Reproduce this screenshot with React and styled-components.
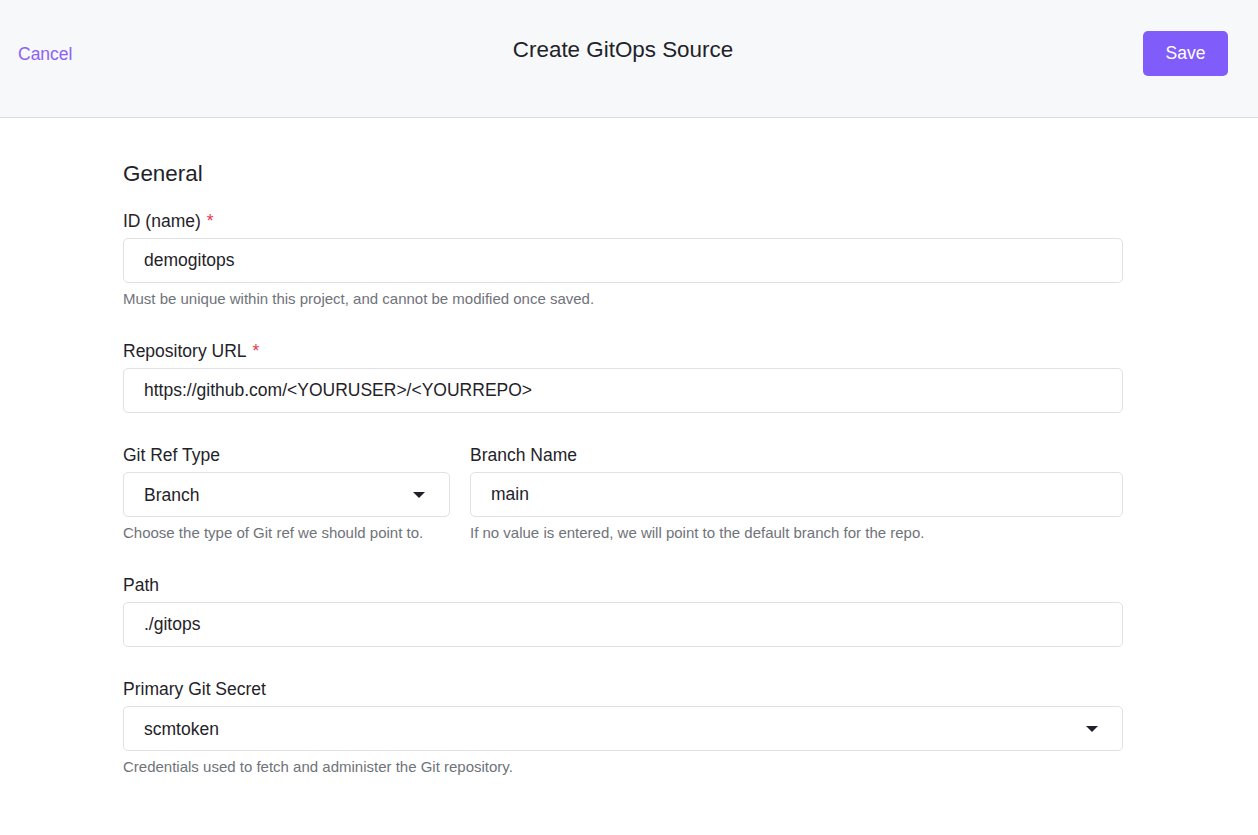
import React, { useState } from "react";
import styled, { createGlobalStyle } from "styled-components";

const GlobalStyle = createGlobalStyle`
  body {
    margin: 0;
    background: #ffffff;
    font-family: "Liberation Sans", Arial, sans-serif;
    color: #1f2329;
  }
`;

const Page = styled.div`
  min-height: 835px;
  background: #fff;
`;

const Header = styled.header`
  height: 117px;
  background: #f7f8fa;
  border-bottom: 1px solid #dcdde0;
  display: grid;
  grid-template-columns: 1fr auto 1fr;
  align-items: start;
  padding: 0 30px 0 18px;
`;

const CancelLink = styled.a`
  justify-self: start;
  margin-top: 44px;
  font-size: 17.5px;
  color: #8b62f8;
  cursor: pointer;
`;

const Title = styled.h1`
  margin: 37px 0 0;
  font-size: 22.4px;
  font-weight: 400;
  color: #1f2329;
`;

const SaveButton = styled.button`
  justify-self: end;
  margin-top: 31px;
  width: 85px;
  height: 45px;
  border: none;
  border-radius: 5px;
  background: #805cfa;
  color: #fff;
  font-family: inherit;
  font-size: 17.5px;
  cursor: pointer;
`;

const Form = styled.form`
  width: 1000px;
  margin: 0 0 0 123px;
  padding: 43px 0 40px;
  display: flex;
  flex-direction: column;
  gap: 30px;
`;

const SectionTitle = styled.h2`
  margin: 0 0 -8px;
  font-size: 22.4px;
  font-weight: 400;
  line-height: 26px;
`;

const Row = styled.div`
  display: grid;
  grid-template-columns: 327px 1fr;
  gap: 20px;
`;

const Field = styled.div`
  display: flex;
  flex-direction: column;
`;

const Label = styled.label`
  font-size: 17.5px;
  line-height: 24px;
  margin-bottom: 5px;
  color: #1f2329;
`;

const Required = styled.span`
  color: #e8384f;
  margin-left: 6px;
`;

const Input = styled.input`
  box-sizing: border-box;
  height: 45px;
  width: 100%;
  padding: 0 20px;
  border: 1px solid #dfe1e5;
  border-radius: 5px;
  font-family: inherit;
  font-size: 17.5px;
  color: #1f2329;
  outline: none;
`;

const SelectBox = styled.div`
  box-sizing: border-box;
  height: 45px;
  padding: 1px 24px 0 20px;
  border: 1px solid #dfe1e5;
  border-radius: 5px;
  display: flex;
  align-items: center;
  justify-content: space-between;
  font-size: 17.5px;
  cursor: pointer;
`;

const Caret = styled.span`
  width: 0;
  height: 0;
  border-left: 6px solid transparent;
  border-right: 6px solid transparent;
  border-top: 6px solid #1f2329;
`;

const Help = styled.div`
  margin-top: 6px;
  font-size: 15px;
  line-height: 20px;
  color: #6f737a;
`;

const Select = ({ value }) => (
  <SelectBox>
    <span>{value}</span>
    <Caret />
  </SelectBox>
);

const App = () => {
  const [name, setName] = useState("demogitops");
  const [url, setUrl] = useState("https://github.com/<YOURUSER>/<YOURREPO>");
  const [branch, setBranch] = useState("main");
  const [path, setPath] = useState("./gitops");

  return (
    <Page>
      <GlobalStyle />
      <Header>
        <CancelLink>Cancel</CancelLink>
        <Title>Create GitOps Source</Title>
        <SaveButton type="button">Save</SaveButton>
      </Header>
      <Form onSubmit={(e) => e.preventDefault()}>
        <SectionTitle>General</SectionTitle>
        <Field>
          <Label>
            ID (name)<Required>*</Required>
          </Label>
          <Input value={name} onChange={(e) => setName(e.target.value)} />
          <Help>Must be unique within this project, and cannot be modified once saved.</Help>
        </Field>
        <Field>
          <Label>
            Repository URL<Required>*</Required>
          </Label>
          <Input value={url} onChange={(e) => setUrl(e.target.value)} />
        </Field>
        <Row>
          <Field>
            <Label>Git Ref Type</Label>
            <Select value="Branch" />
            <Help>Choose the type of Git ref we should point to.</Help>
          </Field>
          <Field>
            <Label>Branch Name</Label>
            <Input value={branch} onChange={(e) => setBranch(e.target.value)} />
            <Help>If no value is entered, we will point to the default branch for the repo.</Help>
          </Field>
        </Row>
        <Field>
          <Label>Path</Label>
          <Input value={path} onChange={(e) => setPath(e.target.value)} />
        </Field>
        <Field>
          <Label>Primary Git Secret</Label>
          <Select value="scmtoken" />
          <Help>Credentials used to fetch and administer the Git repository.</Help>
        </Field>
      </Form>
    </Page>
  );
};

export default App;
